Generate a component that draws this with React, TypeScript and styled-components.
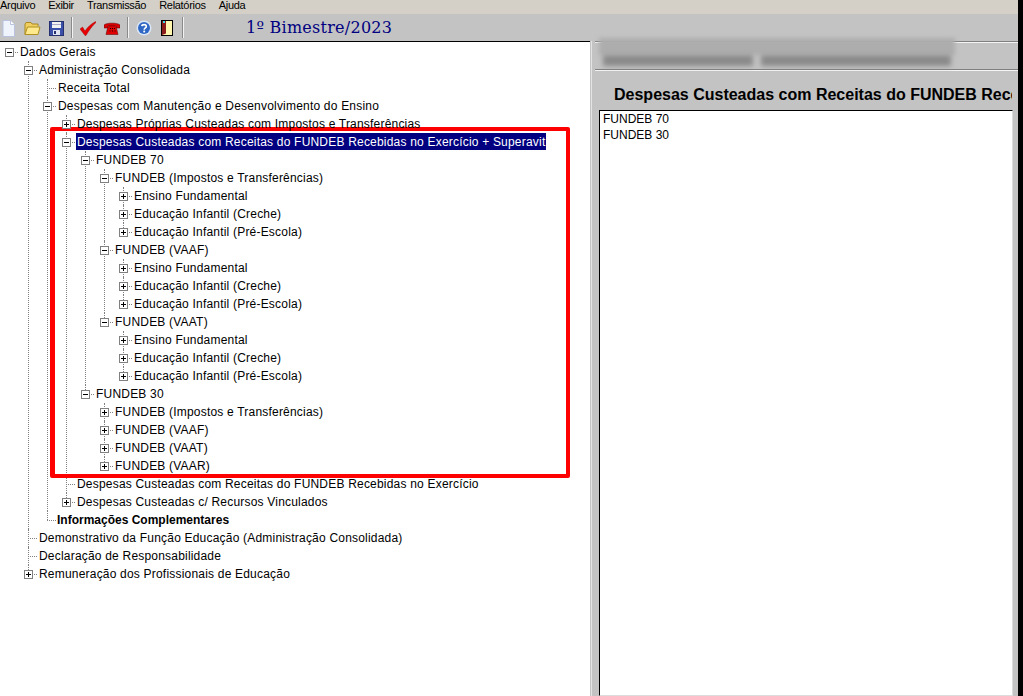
import styled, { createGlobalStyle } from "styled-components";

const GlobalStyle = createGlobalStyle`
  html, body { margin: 0; padding: 0; height: 100%; overflow: hidden; background: #000; }
  #root { height: 100%; }
  * { box-sizing: border-box; }
`;

const Frame = styled.div`
  position: relative;
  height: 696px;
  width: 1023px;
  padding-right: 5px;
  display: flex;
  flex-direction: column;
  background: #000;
  overflow: hidden;
  font-family: "Liberation Sans", Arial, sans-serif;
  font-size: 12px;
  color: #000;
`;

const MenuBar = styled.div`
  height: 14px;
  flex: none;
  display: flex;
  gap: 13px;
  background: #d4d0c8;
  font-size: 11px;
  line-height: 11px;
  letter-spacing: -0.3px;
`;

const Toolbar = styled.div`
  height: 27px;
  flex: none;
  display: flex;
  align-items: center;
  background: #c3c3c3;
  padding-left: 2px;
`;

const ToolIcon = styled.svg<{ $gap?: number }>`
  flex: none;
  margin-right: ${(p) => p.$gap ?? 8}px;
  margin-top: 1px;
`;

const Separator = styled.div<{ $gap?: number }>`
  width: 2px;
  height: 21px;
  flex: none;
  margin-right: ${(p) => p.$gap ?? 7}px;
  background: linear-gradient(90deg, #8a8a8a 50%, #f2f2f2 50%);
`;

const PeriodTitle = styled.div`
  margin-left: 62px;
  font-family: "DejaVu Serif", serif;
  font-size: 16px;
  letter-spacing: 0.25px;
  color: #000080;
`;

const Body = styled.div`
  flex: 1;
  display: flex;
  min-height: 0;
  background: #c3c3c3;
`;

const TreePane = styled.div`
  width: 590px;
  flex: none;
  background: #fff;
  border-top: 1px solid #000;
  padding: 1px 0 0 5px;
  overflow: hidden;
`;

const Splitter = styled.div`
  width: 5px;
  flex: none;
  margin-left: 1px;
  border-left: 1px solid #e4e4e4;
  margin-right: -1px;
`;

const DetailPane = styled.div`
  flex: 1;
  min-width: 0;
  display: flex;
  flex-direction: column;
`;

const RedactedBand = styled.div`
  height: 29px;
  flex: none;
  border-top: 1px solid #808080;
  border-bottom: 1px solid #808080;
  box-shadow: inset 0 1px 0 #f4f4f4, 0 1px 0 #f4f4f4;
`;

const BlurTop = styled.div`
  width: 356px;
  height: 17px;
  margin: -4px 0 0 4px;
  background: #adadad;
  filter: blur(2px);
`;

const BlurBottom = styled.div`
  display: flex;
  gap: 8px;
  margin-left: 8px;
`;

const BlurChunk = styled.div<{ $w: number }>`
  width: ${(p) => p.$w}px;
  height: 11px;
  background: #8a8a8a;
  filter: blur(2.5px);
`;

const DetailTitle = styled.h2`
  margin: 16px 0 0 19px;
  height: 24px;
  width: 398px;
  font-size: 16px;
  line-height: 18px;
  font-weight: 700;
  white-space: nowrap;
  overflow: hidden;
`;

const OptionList = styled.ul`
  list-style: none;
  flex: 1;
  margin: 0 5px 0 4px;
  padding: 0 0 0 3px;
  background: #fff;
  border-top: 1px solid #000;
  border-left: 1px solid #000;
  border-right: 1px solid #dcdcdc;
  border-bottom: 1px solid #dcdcdc;
`;

const Option = styled.li`
  height: 16px;
  line-height: 16px;
`;

const Branch = styled.ul<{ $root?: boolean }>`
  list-style: none;
  margin: 0;
  padding: 0;
  margin-left: ${(p) => (p.$root ? 0 : 19)}px;
`;

const Item = styled.li<{ $root?: boolean; $last?: boolean }>`
  position: relative;

  &::before {
    content: ${(p) => (p.$root ? "none" : '""')};
    position: absolute;
    left: 4px;
    top: 0;
    height: ${(p) => (p.$last ? "9px" : "100%")};
    border-left: 1px dotted #808080;
  }

  &::after {
    content: "";
    position: absolute;
    left: 4px;
    width: 9px;
    top: 9px;
    border-top: 1px dotted #808080;
  }
`;

const Row = styled.div<{ $leaf?: boolean }>`
  position: relative;
  z-index: 1;
  height: 18px;
  display: flex;
  align-items: flex-start;
  padding-left: ${(p) => (p.$leaf ? 15 : 0)}px;
`;

const Expander = styled.span<{ $open?: boolean }>`
  width: 9px;
  height: 9px;
  flex: none;
  margin: 5px 6px 0 0;
  border: 1px solid #808080;
  background:
    linear-gradient(#000, #000) center / 5px 1px no-repeat,
    ${(p) => (p.$open ? "linear-gradient(#fff, #fff)" : "linear-gradient(#000, #000) center / 1px 5px no-repeat")},
    #fff;
`;

const Label = styled.span<{ $bold?: boolean; $selected?: boolean }>`
  height: 17px;
  line-height: 18px;
  margin-left: ${(p) => (p.$bold ? -2 : -1)}px;
  padding: 0 1px;
  white-space: nowrap;
  letter-spacing: ${(p) => (p.$bold ? 0 : 0.2)}px;
  font-weight: ${(p) => (p.$bold ? 700 : 400)};
  background: ${(p) => (p.$selected ? "#000080" : "transparent")};
  color: ${(p) => (p.$selected ? "#fff" : "#000")};
`;

const Highlight = styled.div`
  position: absolute;
  left: 50px;
  top: 127px;
  width: 520px;
  height: 351px;
  border: 4px solid #ff0000;
  border-left-width: 5px;
  border-radius: 2px;
  pointer-events: none;
`;

interface TreeNode {
  label: string;
  closed?: boolean;
  bold?: boolean;
  selected?: boolean;
  children?: TreeNode[];
}

const stages: TreeNode[] = [
  { label: "Ensino Fundamental", closed: true },
  { label: "Educação Infantil (Creche)", closed: true },
  { label: "Educação Infantil (Pré-Escola)", closed: true },
];

const tree: TreeNode[] = [
  {
    label: "Dados Gerais",
    children: [
      {
        label: "Administração Consolidada",
        children: [
          { label: "Receita Total" },
          {
            label: "Despesas com Manutenção e Desenvolvimento do Ensino",
            children: [
              { label: "Despesas Próprias Custeadas com Impostos e Transferências", closed: true },
              {
                label: "Despesas Custeadas com Receitas do FUNDEB Recebidas no Exercício + Superavit",
                selected: true,
                children: [
                  {
                    label: "FUNDEB 70",
                    children: [
                      { label: "FUNDEB (Impostos e Transferências)", children: stages },
                      { label: "FUNDEB (VAAF)", children: stages },
                      { label: "FUNDEB (VAAT)", children: stages },
                    ],
                  },
                  {
                    label: "FUNDEB 30",
                    children: [
                      { label: "FUNDEB (Impostos e Transferências)", closed: true },
                      { label: "FUNDEB (VAAF)", closed: true },
                      { label: "FUNDEB (VAAT)", closed: true },
                      { label: "FUNDEB (VAAR)", closed: true },
                    ],
                  },
                ],
              },
              { label: "Despesas Custeadas com Receitas do FUNDEB Recebidas no Exercício" },
              { label: "Despesas Custeadas c/ Recursos Vinculados", closed: true },
            ],
          },
          { label: "Informações Complementares", bold: true },
        ],
      },
      { label: "Demonstrativo da Função Educação (Administração Consolidada)" },
      { label: "Declaração de Responsabilidade" },
      { label: "Remuneração dos Profissionais de Educação", closed: true },
    ],
  },
];

function TreeBranch({ nodes, root }: { nodes: TreeNode[]; root?: boolean }) {
  return (
    <Branch $root={root}>
      {nodes.map((node, i) => {
        const hasBox = node.closed || node.children;
        return (
          <Item key={node.label + i} $root={root} $last={i === nodes.length - 1}>
            <Row $leaf={!hasBox}>
              {hasBox && <Expander $open={!!node.children} />}
              <Label $bold={node.bold} $selected={node.selected}>
                {node.label}
              </Label>
            </Row>
            {node.children && <TreeBranch nodes={node.children} />}
          </Item>
        );
      })}
    </Branch>
  );
}

function ToolIcons() {
  return (
    <>
      <ToolIcon width="13" height="17" viewBox="0 0 13 17" $gap={9}>
        <path d="M1 .5h7.500l4 4v12H1z" fill="#eef3fc" stroke="#b9c2de" />
        <path d="M8.500.5v4h4" fill="#fff" stroke="#b9c2de" />
      </ToolIcon>
      <ToolIcon width="17" height="15" viewBox="0 0 17 15" $gap={8}>
        <path d="M1 13.500V3l1-1.500h5L8 3h6v2" fill="#f0cf60" stroke="#a88a20" />
        <path d="M1 13.500 3.500 6H16l-2 7.500z" fill="#ffe98e" stroke="#b0901f" />
      </ToolIcon>
      <ToolIcon width="15" height="15" viewBox="0 0 15 15" $gap={7}>
        <rect x=".5" y=".5" width="14" height="14" fill="#3a4fa8" stroke="#26306e" />
        <rect x="3" y="1" width="9" height="6" fill="#f2f2f2" />
        <rect x="3" y="3" width="9" height="1" fill="#a8a8c8" />
        <rect x="4" y="9" width="7" height="5" fill="#dfe3f2" />
        <rect x="5" y="10" width="2" height="3" fill="#26306e" />
      </ToolIcon>
      <Separator />
      <ToolIcon width="16" height="15" viewBox="0 0 16 15" $gap={8}>
        <path d="M0 8 2.500 6 5 10C7.500 6 11 3 15.500 .5L16 1.500C12 5 9 9.500 6 14.500H5z" fill="#e80000" stroke="#900000" strokeWidth=".4" />
      </ToolIcon>
      <ToolIcon width="16" height="13" viewBox="0 0 16 13" $gap={7}>
        <path d="M0 3C2 .5 14 .5 16 3v3h-4V4H4v2H0z" fill="#d80000" stroke="#600000" strokeWidth=".5" />
        <path d="M3.500 6 5 4h6l1.500 2 1.500 6.500H2z" fill="#e00000" stroke="#600000" strokeWidth=".5" />
        <path d="M6 6h1v1H6zm2 0h1v1H8zm2 0h1v1h-1zM5.500 8.500h1v1h-1zm2.500 0h1v1H8zm2.500 0h1v1h-1z" fill="#200000" />
      </ToolIcon>
      <Separator />
      <ToolIcon width="16" height="16" viewBox="0 0 16 16" $gap={9}>
        <circle cx="8" cy="8" r="7.500" fill="#dbe6f6" />
        <circle cx="8" cy="8" r="6" fill="#2f68c4" />
        <path d="M5.800 6.200C6 4.200 10.300 4 10.300 6.400 10.300 8 8.200 8 8.200 9.800" fill="none" stroke="#fff" strokeWidth="1.600" />
        <rect x="7.300" y="10.600" width="1.800" height="1.800" fill="#fff" />
      </ToolIcon>
      <ToolIcon width="12" height="16" viewBox="0 0 12 16" $gap={9}>
        <rect x=".5" y=".5" width="11" height="15" fill="#fff6b0" stroke="#000" />
        <path d="M1 1h4v12.500L1 15z" fill="#8a1c1c" />
        <rect x="2" y="1" width="2" height="2" fill="#3fd8e8" />
      </ToolIcon>
      <Separator $gap={0} />
    </>
  );
}

export default function App() {
  return (
    <Frame>
      <GlobalStyle />
      <MenuBar>
        <span>Arquivo</span>
        <span>Exibir</span>
        <span>Transmissão</span>
        <span>Relatórios</span>
        <span>Ajuda</span>
      </MenuBar>
      <Toolbar>
        <ToolIcons />
        <PeriodTitle>1º Bimestre/2023</PeriodTitle>
      </Toolbar>
      <Body>
        <TreePane>
          <TreeBranch nodes={tree} root />
        </TreePane>
        <Splitter />
        <DetailPane>
          <RedactedBand>
            <BlurTop />
            <BlurBottom>
              <BlurChunk $w={150} />
              <BlurChunk $w={190} />
            </BlurBottom>
          </RedactedBand>
          <DetailTitle>Despesas Custeadas com Receitas do FUNDEB Recebidas no Exercício</DetailTitle>
          <OptionList>
            <Option>FUNDEB 70</Option>
            <Option>FUNDEB 30</Option>
          </OptionList>
        </DetailPane>
      </Body>
      <Highlight />
    </Frame>
  );
}
